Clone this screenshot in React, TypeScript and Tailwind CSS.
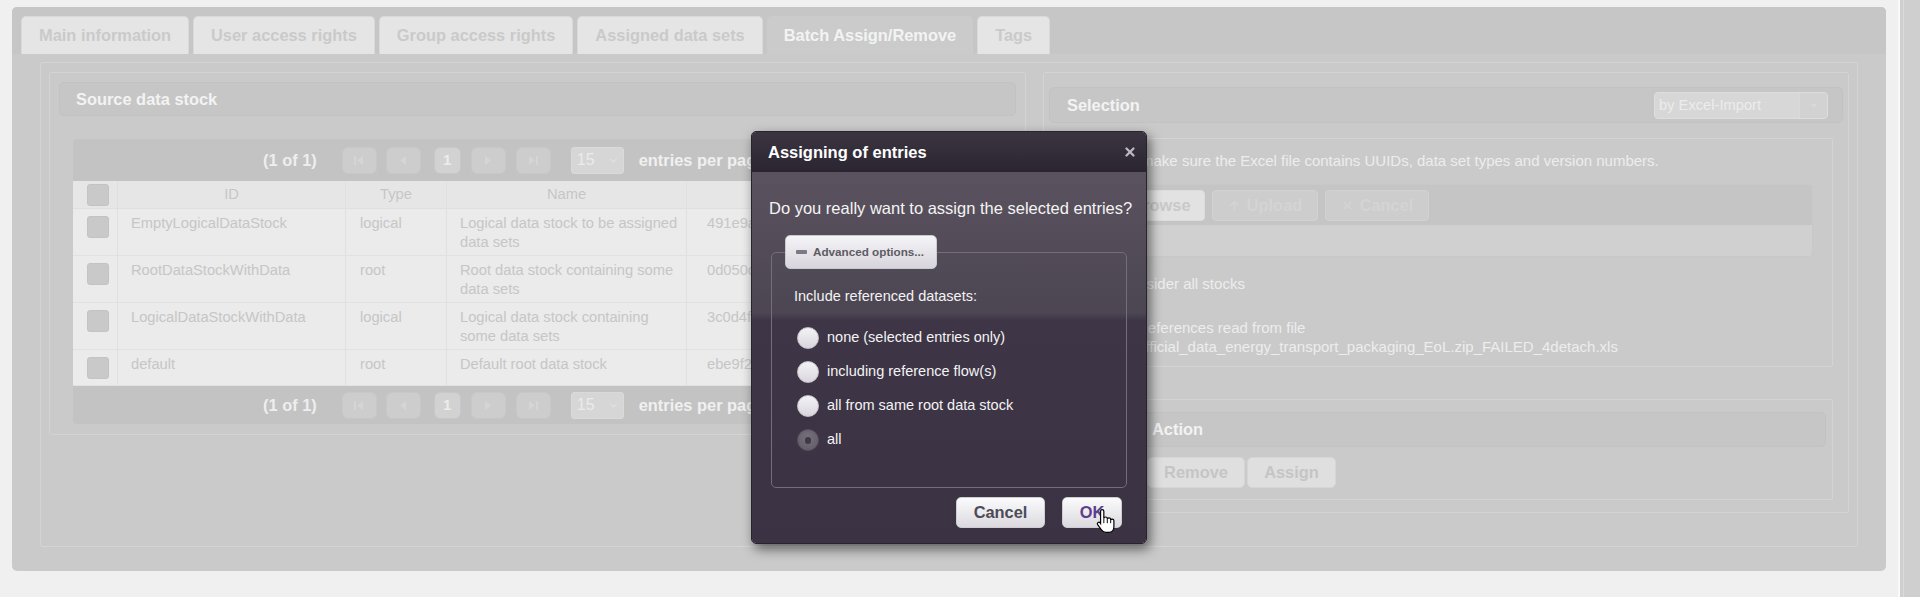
import { ArrowUp, ChevronDown, Plus, X } from "lucide-react";

const rows = [
  {
    id: "EmptyLogicalDataStock",
    type: "logical",
    name: ["Logical data stock to be assigned", "data sets"],
    uuid: "491e9a",
  },
  {
    id: "RootDataStockWithData",
    type: "root",
    name: ["Root data stock containing some", "data sets"],
    uuid: "0d050c",
  },
  {
    id: "LogicalDataStockWithData",
    type: "logical",
    name: ["Logical data stock containing", "some data sets"],
    uuid: "3c0d4f",
  },
  {
    id: "default",
    type: "root",
    name: ["Default root data stock"],
    uuid: "ebe9f2",
  },
];

const tabs = [
  "Main information",
  "User access rights",
  "Group access rights",
  "Assigned data sets",
  "Batch Assign/Remove",
  "Tags",
];

const cols = "grid grid-cols-[45px_228px_101px_240px_1fr]";

function Tri({ dir, bar }: { dir: "l" | "r"; bar?: boolean }) {
  return (
    <svg width="10" height="9" viewBox="0 0 10 9" className="fill-[#d5d5d5]">
      {dir === "l" ? (
        <>
          {bar && <rect x="0" y="0" width="2" height="9" />}
          <path d={bar ? "M9 0v9L3 4.5z" : "M8 0v9L2 4.5z"} />
        </>
      ) : (
        <>
          <path d={bar ? "M1 0v9l6-4.5z" : "M2 0v9l6-4.5z"} />
          {bar && <rect x="8" y="0" width="2" height="9" />}
        </>
      )}
    </svg>
  );
}

function PagBtn({ children, className }: { children: React.ReactNode; className?: string }) {
  return (
    <div
      className={`h-[27px] flex items-center justify-center rounded-[6px] bg-[#cdcdcd] border border-[#c8c8c8] ${className ?? "w-[35px]"}`}
    >
      {children}
    </div>
  );
}

function Paginator() {
  return (
    <div className="flex items-center h-full pl-[190px]">
      <span className="text-[16.4px] font-bold text-[#eeeeee]">(1 of 1)</span>
      <PagBtn className="w-[35px] ml-[25px]">
        <Tri dir="l" bar />
      </PagBtn>
      <PagBtn className="w-[35px] ml-[9px]">
        <Tri dir="l" />
      </PagBtn>
      <PagBtn className="w-[27px] ml-[13px] bg-[#d2d2d2]">
        <span className="text-[15px] font-bold text-[#ececec]">1</span>
      </PagBtn>
      <PagBtn className="w-[35px] ml-[10px]">
        <Tri dir="r" />
      </PagBtn>
      <PagBtn className="w-[35px] ml-[10px]">
        <Tri dir="r" bar />
      </PagBtn>
      <div className="ml-[20px] h-[27px] w-[53px] flex items-center rounded-[3px] bg-[#d6d6d6] border border-[#dadada]">
        <span className="pl-[5px] text-[16px] text-[#ebebeb]">15</span>
        <ChevronDown size={11} strokeWidth={2.5} className="ml-auto mr-[4px] text-[#e2e2e2]" />
      </div>
      <span className="ml-[15px] text-[16.4px] font-bold text-[#f0f0f0] whitespace-nowrap">
        entries per page
      </span>
    </div>
  );
}

function Box() {
  return <div className="w-[22px] h-[22px] rounded-[3px] bg-[#c9c9c9] border border-[#c3c3c3]" />;
}

function HandCursor() {
  return (
    <svg width="22" height="26" viewBox="0 0 20 24" className="absolute left-[32px] top-[10px]">
      <path
        d="M6.5 1.5C7.3 1.5 8 2.2 8 3V9.5C8.2 8.7 9 8.3 9.7 8.3C10.5 8.3 11.2 8.9 11.2 9.8V10.3C11.4 9.6 12.1 9.2 12.8 9.2C13.6 9.2 14.3 9.9 14.3 10.7V11.2C14.5 10.6 15.1 10.2 15.8 10.2C16.6 10.2 17.3 10.9 17.3 11.7V17C17.3 20 15.5 22.5 12.5 22.5H10C8 22.5 6.8 21.6 5.8 20.2L2.3 15.3C1.8 14.6 2 13.7 2.7 13.3C3.3 12.9 4.1 13.1 4.6 13.7L5 14.3V3C5 2.2 5.7 1.5 6.5 1.5Z"
        fill="#ffffff"
        stroke="#000000"
        strokeWidth="1.1"
      />
      <path d="M8 9.5V14M11.2 10.3V14M14.3 11.2V14" stroke="#000000" strokeWidth="0.9" />
    </svg>
  );
}

function Radio({ label, checked }: { label: string; checked?: boolean }) {
  return (
    <div className="h-[34px] flex items-center">
      {checked ? (
        <div className="ml-[3px] w-[22px] h-[22px] rounded-full bg-[radial-gradient(circle_at_50%_40%,#77717d,#5f5966)] border border-[#57515d] flex items-center justify-center">
          <div className="w-[6px] h-[7px] rounded-full bg-[#3f3945]" />
        </div>
      ) : (
        <div className="ml-[3px] w-[22px] h-[22px] rounded-full bg-[linear-gradient(to_bottom,#f3f2f5,#d9d7dd)] border border-[#c4c1c8]" />
      )}
      <span className="ml-[8px] text-[14.5px] text-[#f3f3f3]">{label}</span>
    </div>
  );
}

export default function App() {
  return (
    <div className="relative w-full h-[597px] overflow-hidden bg-[#f0f0f0] flex font-['Liberation_Sans',Arial,sans-serif]">
      <div className="flex-1 pt-[7px] pl-[12px] pr-[12px]">
        <div className="h-[564px] rounded-[5px] bg-[#cacaca] flex flex-col">
          {/* tab strip */}
          <div className="h-[47px] shrink-0 rounded-t-[5px] bg-[#c6c6c6] flex items-end pl-[9px] gap-[4px]">
            {tabs.map((t) =>
              t === "Batch Assign/Remove" ? (
                <div
                  key={t}
                  className="h-[38px] px-[17px] flex items-center rounded-t-[5px] bg-[#cbcbcb] text-[16.4px] font-bold text-[#f3f3f3]"
                >
                  {t}
                </div>
              ) : (
                <div
                  key={t}
                  className="h-[38px] px-[17px] flex items-center rounded-t-[5px] bg-[#e5e5e5] border border-b-0 border-[#d9d9d9] text-[16.4px] font-bold text-[#cacaca]"
                >
                  {t}
                </div>
              )
            )}
          </div>

          {/* tab content */}
          <div className="mt-[8px] mx-[28px] h-[485px] border border-[#d4d4d4] rounded-[2px] px-[8px] pt-[9px] flex gap-[17px] items-start">
            {/* left: source data stock */}
            <div className="w-[977px] shrink-0 border border-[#d4d4d4] rounded-[3px] p-[9px] pb-[10px]">
              <div className="h-[34px] flex items-center rounded-[5px] bg-[#c6c6c6] border border-[#c2c2c2] pl-[16px] text-[16.4px] font-bold text-[#f3f3f3]">
                Source data stock
              </div>
              <div className="mt-[23px] px-[14px]">
                <div className="h-[42px] rounded-t-[4px] bg-[#c3c3c3]">
                  <Paginator />
                </div>
                <div className="bg-[#ebebeb] text-[14.7px] leading-[19px] text-[#c6c6c6]">
                  <div className={`${cols} h-[28px] bg-[#e6e6e6] border-b border-[#dfdfdf]`}>
                    <div className="flex items-center pl-[14px] border-r border-[#e0e0e0]">
                      <Box />
                    </div>
                    <div className="flex items-center justify-center border-r border-[#e0e0e0]">ID</div>
                    <div className="flex items-center justify-center border-r border-[#e0e0e0]">Type</div>
                    <div className="flex items-center justify-center border-r border-[#e0e0e0]">Name</div>
                    <div />
                  </div>
                  {rows.map((r) => (
                    <div key={r.id} className={`${cols} border-b border-[#e2e2e2]`}>
                      <div className="flex pl-[14px] pt-[7px] pb-[6px] border-r border-[#e0e0e0]">
                        <Box />
                      </div>
                      <div className="pl-[13px] pt-[5px] pb-[3px] border-r border-[#e0e0e0] whitespace-nowrap">
                        {r.id}
                      </div>
                      <div className="pl-[14px] pt-[5px] pb-[3px] border-r border-[#e0e0e0]">{r.type}</div>
                      <div className="pl-[13px] pt-[5px] pb-[3px] border-r border-[#e0e0e0] whitespace-nowrap">
                        {r.name.map((l, i) => (
                          <div key={i}>{l}</div>
                        ))}
                      </div>
                      <div className="pl-[20px] pt-[5px] pb-[3px] whitespace-nowrap">{r.uuid}</div>
                    </div>
                  ))}
                </div>
                <div className="h-[38px] rounded-b-[4px] bg-[#c3c3c3]">
                  <Paginator />
                </div>
              </div>
            </div>

            {/* right: selection */}
            <div className="flex-1 border border-[#d4d4d4] rounded-[3px] px-[5px] pt-[14px] pb-[12px]">
              <div className="h-[36px] flex items-center justify-between rounded-[5px] bg-[#c6c6c6] border border-[#c2c2c2] pl-[17px] pr-[14px]">
                <span className="text-[16.4px] font-bold text-[#f3f3f3]">Selection</span>
                <div className="h-[27px] w-[174px] flex items-center rounded-[4px] bg-[#d7d7d7] border border-[#dedede] overflow-hidden">
                  <span className="pl-[4px] text-[14.7px] text-[#ececec]">by Excel-Import</span>
                  <div className="ml-auto h-full w-[28px] flex items-center justify-center bg-[#d2d2d2] border-l border-[#dadada]">
                    <ChevronDown size={10} strokeWidth={2.5} className="text-[#e0e0e0]" />
                  </div>
                </div>
              </div>

              <div className="mt-[15px] ml-[6px] mr-[10px] border border-[#d4d4d4] rounded-[2px] pl-[35px] pr-[19px] pt-[13px] pb-[10px] text-[15px] text-[#ededed]">
                <div className="leading-[18px] whitespace-nowrap">
                  Please make sure the Excel file contains UUIDs, data set types and version numbers.
                </div>
                <div className="mt-[14px] rounded-[4px] overflow-hidden border border-[#c8c8c8]">
                  <div className="h-[40px] bg-[#c5c5c5] flex items-center pl-[6px] gap-[7px]">
                    <div className="h-[31px] w-[107px] flex items-center justify-center gap-[6px] rounded-[4px] bg-[#e2e2e2] border border-[#dcdcdc] text-[16.4px] font-bold text-[#c9c9c9]">
                      <Plus size={13} strokeWidth={3} />
                      Browse
                    </div>
                    <div className="h-[31px] w-[106px] flex items-center justify-center gap-[6px] rounded-[4px] bg-[#cdcdcd] border border-[#d2d2d2] text-[16.4px] font-bold text-[#d4d4d4]">
                      <ArrowUp size={13} strokeWidth={3} />
                      Upload
                    </div>
                    <div className="h-[31px] w-[104px] flex items-center justify-center gap-[6px] rounded-[4px] bg-[#cdcdcd] border border-[#d2d2d2] text-[16.4px] font-bold text-[#d4d4d4]">
                      <X size={13} strokeWidth={3} />
                      Cancel
                    </div>
                  </div>
                  <div className="h-[31px] bg-[#d0d0d0]" />
                </div>
                <div className="mt-[17px] flex items-center gap-[8px] leading-[18px]">
                  <div className="w-[20px] h-[20px] rounded-[3px] bg-[#d6d6d6] border border-[#c8c8c8]" />
                  <span>Consider all stocks</span>
                </div>
                <div className="mt-[24px] ml-[46px] leading-[19px] whitespace-nowrap">
                  <div>References read from file</div>
                  <div>official_data_energy_transport_packaging_EoL.zip_FAILED_4detach.xls</div>
                </div>
              </div>

              <div className="mt-[32px] ml-[6px] mr-[10px] border border-[#d4d4d4] rounded-[2px] pt-[12px] pb-[11px]">
                <div className="ml-[81px] mr-[6px] h-[35px] flex items-center rounded-[5px] bg-[#c6c6c6] border border-[#c2c2c2] pl-[14px] text-[16.4px] font-bold text-[#f3f3f3]">
                  Action
                </div>
                <div className="mt-[10px] ml-[91px] flex gap-[2px]">
                  <div className="h-[31px] w-[98px] flex items-center justify-center rounded-[5px] bg-[#dfdfdf] border border-[#d6d6d6] text-[16.4px] font-bold text-[#c5c5c5]">
                    Remove
                  </div>
                  <div className="h-[31px] w-[89px] flex items-center justify-center rounded-[5px] bg-[#dfdfdf] border border-[#d6d6d6] text-[16.4px] font-bold text-[#c5c5c5]">
                    Assign
                  </div>
                </div>
              </div>
            </div>
          </div>
        </div>
      </div>

      {/* scrollbar */}
      <div className="w-[22px] h-full border-l-[2px] border-[#fafafa] bg-[#cfcfcf] flex">
        <div className="ml-[3px] w-[1px] h-full bg-[#dadada]" />
      </div>

      {/* modal dialog */}
      <div className="absolute left-[751px] top-[131px] w-[396px] rounded-[5px] overflow-hidden border border-[#29232e] shadow-[3px_5px_12px_rgba(0,0,0,0.55)]">
        <div className="h-[40px] flex items-center justify-between pl-[16px] pr-[9px] bg-[linear-gradient(to_bottom,#3b3441,#2b2531)]">
          <span className="text-[16.5px] font-bold text-white">Assigning of entries</span>
          <X size={14} strokeWidth={4} className="text-[#bcb8c2]" />
        </div>
        <div className="pt-[26px] pb-[15px] bg-[linear-gradient(to_bottom,#5a535f_0%,#4c4552_38%,#3e3647_40%,#3b3343_100%)]">
          <p className="pl-[17px] text-[16.5px] leading-[20px] text-[#f4f4f4] whitespace-nowrap">
            Do you really want to assign the selected entries?
          </p>
          <fieldset className="mx-[19px] mt-[17px] border border-[#746d7b] rounded-[5px] px-[13px] pb-[30px]">
            <legend className="h-[34px] rounded-[5px] bg-[linear-gradient(to_bottom,#f5f4f7,#d7d5dc)] border border-[#cbc9cf]">
              <span className="h-full flex items-center pl-[10px] pr-[12px]">
                <span className="w-[11px] h-[4px] rounded-[1px] bg-[#7c7982]" />
                <span className="ml-[6px] text-[11.7px] font-bold text-[#5d5b63]">Advanced options...</span>
              </span>
            </legend>
            <div className="px-[9px]">
              <div className="mt-[18px] text-[14.5px] leading-[18px] text-[#f3f3f3]">
                Include referenced datasets:
              </div>
              <div className="mt-[16px]">
                <Radio label="none (selected entries only)" />
                <Radio label="including reference flow(s)" />
                <Radio label="all from same root data stock" />
                <Radio label="all" checked />
              </div>
            </div>
          </fieldset>
          <div className="mt-[9px] pr-[24px] flex justify-end gap-[17px]">
            <div className="h-[31px] w-[89px] flex items-center justify-center rounded-[5px] bg-[linear-gradient(to_bottom,#fbfbfc,#dbd9df)] border border-[#cfcdd3] text-[16.4px] font-bold text-[#4d4b57]">
              Cancel
            </div>
            <div className="relative h-[31px] w-[60px] flex items-center justify-center rounded-[5px] bg-[linear-gradient(to_bottom,#fbfbfc,#dbd9df)] border border-[#cfcdd3] text-[16.4px] font-bold text-[#5b3f8c]">
              OK
              <HandCursor />
            </div>
          </div>
        </div>
      </div>
    </div>
  );
}
